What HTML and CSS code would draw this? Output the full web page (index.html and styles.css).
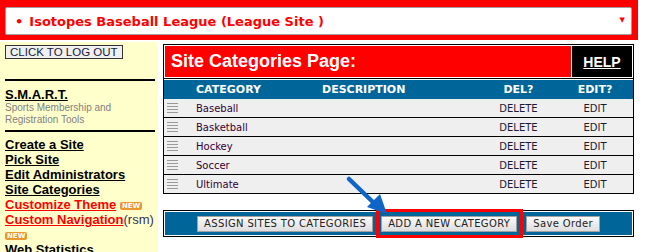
FILE: index.html
```html
<!DOCTYPE html>
<html lang="en">
<head>
    <meta charset="UTF-8">
    <title>Site Categories Page</title>
    <link rel="stylesheet" href="styles.css">
</head>
<body>

    <!-- site picker -->
    <div class="site-bar">
        <div class="site-select">
            <span class="site-name"><span class="dot">&bull;</span>Isotopes Baseball League (League Site )</span>
            <span class="caret">&#9660;</span>
        </div>
    </div>

    <div class="layout">
        <!-- left menu -->
        <div class="sidebar">
            <button class="logout">CLICK TO LOG OUT</button>
            <hr class="rule first">
            <a class="smart" href="#">S.M.A.R.T.</a>
            <p class="tagline">Sports Membership and Registration Tools</p>
            <hr class="rule">
            <ul class="nav">
                <li><a href="#">Create a Site</a></li>
                <li><a href="#">Pick Site</a></li>
                <li><a href="#">Edit Administrators</a></li>
                <li><a href="#">Site Categories</a></li>
                <li><a class="hot" href="#">Customize Theme</a> <span class="new">NEW</span></li>
                <li><a class="hot" href="#">Custom Navigation</a><span class="rsm">(rsm)</span> <span class="new">NEW</span></li>
                <li><a href="#">Web Statistics</a></li>
            </ul>
        </div>

        <!-- content -->
        <div class="main">
            <div class="page-head">
                <div class="page-title">Site Categories Page:</div>
                <div class="help"><a href="#">HELP</a></div>
            </div>

            <div class="cat-table">
                <div class="cat-row cat-head">
                    <span></span><span>CATEGORY</span><span>DESCRIPTION</span><span class="mid">DEL?</span><span class="mid">EDIT?</span>
                </div>
                <div class="cat-row">
                    <span class="grip"><svg width="11" height="10"><path d="M0 0.5H11M0 3.5H11M0 6.5H11M0 9.5H11"/></svg></span><span class="name">Baseball</span><span></span><span class="mid">DELETE</span><span class="mid">EDIT</span>
                </div>
                <div class="cat-row">
                    <span class="grip"><svg width="11" height="10"><path d="M0 0.5H11M0 3.5H11M0 6.5H11M0 9.5H11"/></svg></span><span class="name">Basketball</span><span></span><span class="mid">DELETE</span><span class="mid">EDIT</span>
                </div>
                <div class="cat-row">
                    <span class="grip"><svg width="11" height="10"><path d="M0 0.5H11M0 3.5H11M0 6.5H11M0 9.5H11"/></svg></span><span class="name">Hockey</span><span></span><span class="mid">DELETE</span><span class="mid">EDIT</span>
                </div>
                <div class="cat-row">
                    <span class="grip"><svg width="11" height="10"><path d="M0 0.5H11M0 3.5H11M0 6.5H11M0 9.5H11"/></svg></span><span class="name">Soccer</span><span></span><span class="mid">DELETE</span><span class="mid">EDIT</span>
                </div>
                <div class="cat-row">
                    <span class="grip"><svg width="11" height="10"><path d="M0 0.5H11M0 3.5H11M0 6.5H11M0 9.5H11"/></svg></span><span class="name">Ultimate</span><span></span><span class="mid">DELETE</span><span class="mid">EDIT</span>
                </div>
            </div>

            <div class="actions">
                <div class="actions-inner">
                    <button class="btn">ASSIGN SITES TO CATEGORIES</button>
                    <span class="marked"><button class="btn">ADD A NEW CATEGORY</button></span>
                    <button class="btn">Save Order</button>
                </div>
            </div>

            <!-- blue pointer arrow -->
            <svg class="pointer" width="50" height="48" viewBox="343 172 50 48">
                <line x1="349" y1="179" x2="376" y2="205" stroke="#0f64c8" stroke-width="4.5" stroke-linecap="round"/>
                <polygon points="387,214 367,207 380,194" fill="#0f64c8"/>
            </svg>
        </div>
    </div>

</body>
</html>
```

FILE: styles.css
```css
body {
    margin: 0;
    background: #fff;
    font-family: "Liberation Sans", Arial, sans-serif;
    overflow: hidden;
}

/* site picker */
.site-bar {
    width: 638px;
    height: 40px;
    box-sizing: border-box;
    background: #ff0000;
    padding: 7px 6px 5px 5px;
    margin-bottom: 2px;
}
.site-select {
    height: 28px;
    box-sizing: border-box;
    background: #fff;
    border: 1px solid #a0a0a0;
    border-radius: 2px;
    display: flex;
    align-items: center;
    justify-content: space-between;
    padding: 0 6px 0 9px;
    color: #ff0000;
    font-family: "DejaVu Sans", Verdana, sans-serif;
}
.site-name {
    font-size: 13px;
    font-weight: bold;
}
.dot {
    margin-right: 6px;
}
.caret {
    font-size: 7px;
    margin-top: -2px;
}

.layout {
    display: flex;
    align-items: flex-start;
}

/* left menu */
.sidebar {
    width: 158px;
    height: 220px;
    box-sizing: border-box;
    background: #ffffcc;
    padding: 3px 3px 0 5px;
    overflow: hidden;
}
.logout {
    display: block;
    font-family: "Liberation Sans", Arial, sans-serif;
    font-size: 11.5px;
    line-height: 12px;
    color: #1a1a3a;
    background: #f0f0f0;
    border: 1px solid #333;
    padding: 0 4px;
    margin: 0;
}
.rule {
    border: 0;
    height: 2px;
    background: #000;
    margin: 5px 0 5px;
}
.rule.first {
    margin: 20px 0 6px;
}
.smart {
    display: block;
    font-size: 13px;
    line-height: 15px;
    font-weight: bold;
    color: #000;
}
.tagline {
    margin: 0;
    font-size: 10px;
    line-height: 11.5px;
    color: #808080;
}
.nav {
    list-style: none;
    margin: 0;
    padding: 0;
    font-size: 13px;
    line-height: 15px;
}
.nav a {
    color: #000;
    font-weight: bold;
}
.nav a.hot {
    color: #ff0000;
}
.rsm {
    color: #333355;
}
.new {
    display: inline-block;
    vertical-align: 1px;
    background: #e8982e;
    color: #fff;
    font-family: "DejaVu Sans", Verdana, sans-serif;
    font-size: 7px;
    font-weight: bold;
    line-height: 8px;
    padding: 0 2px;
    border-radius: 2px;
}

/* content */
.main {
    position: relative;
    width: 471px;
    margin: 2px 0 0 5px;
    font-family: "DejaVu Sans", Verdana, sans-serif;
}
.page-head {
    display: flex;
    gap: 1px;
    padding: 1px;
    border: 1px solid #000;
    background: #fff;
}
.page-title {
    flex: 1;
    height: 31px;
    background: #ff0000;
    color: #fff;
    font-family: "Liberation Sans", Arial, sans-serif;
    font-size: 18px;
    font-weight: bold;
    display: flex;
    align-items: center;
    padding-left: 6px;
}
.help {
    width: 60px;
    background: #000;
    display: flex;
    align-items: center;
    justify-content: center;
}
.help a {
    color: #fff;
    font-family: "Liberation Sans", Arial, sans-serif;
    font-size: 14px;
    font-weight: bold;
}

.cat-table {
    border: 1px solid #000;
    border-top: 0;
    padding-top: 1px;
    background: #fff;
}
.cat-row {
    display: grid;
    grid-template-columns: 26px 126px 164px 77px 76px;
    align-items: center;
    height: 18px;
    background: #efefef;
    border-bottom: 1px solid #000;
    font-size: 10px;
    color: #1a1a33;
}
.cat-row:last-child {
    border-bottom: 0;
}
.cat-row > span {
    padding-left: 6px;
}
.cat-row > .mid {
    padding: 0;
    text-align: center;
}
.cat-head {
    height: 19px;
    background: #006699;
    color: #fff;
    font-size: 11px;
    font-weight: bold;
    border-bottom: 0;
}
.cat-row .grip {
    padding-left: 3px;
    align-self: start;
    padding-top: 4px;
    line-height: 0;
}
.grip path {
    stroke: #9a9a9a;
    stroke-width: 1;
}
.name {
    color: #330033;
}

.actions {
    margin-top: 16px;
    border: 1px solid #000;
    padding: 1px;
    background: #fff;
}
.actions-inner {
    height: 23px;
    background: #006699;
    display: flex;
    align-items: center;
    justify-content: center;
    gap: 3px;
}
.btn {
    font-family: "DejaVu Sans", Verdana, sans-serif;
    font-size: 10px;
    letter-spacing: 0.35px;
    line-height: 12px;
    height: 16px;
    color: #222;
    background: linear-gradient(#fafafa, #dedede);
    border: 1px solid #a0a0a0;
    padding: 1px 6px;
    margin: 0;
}
.btn.save {
    letter-spacing: 0;
}
.marked {
    display: flex;
    border: 3px solid #ff0000;
    padding: 4px 3px 3px 2px;
}

.pointer {
    position: absolute;
    left: 180px;
    top: 128px;
}
```
